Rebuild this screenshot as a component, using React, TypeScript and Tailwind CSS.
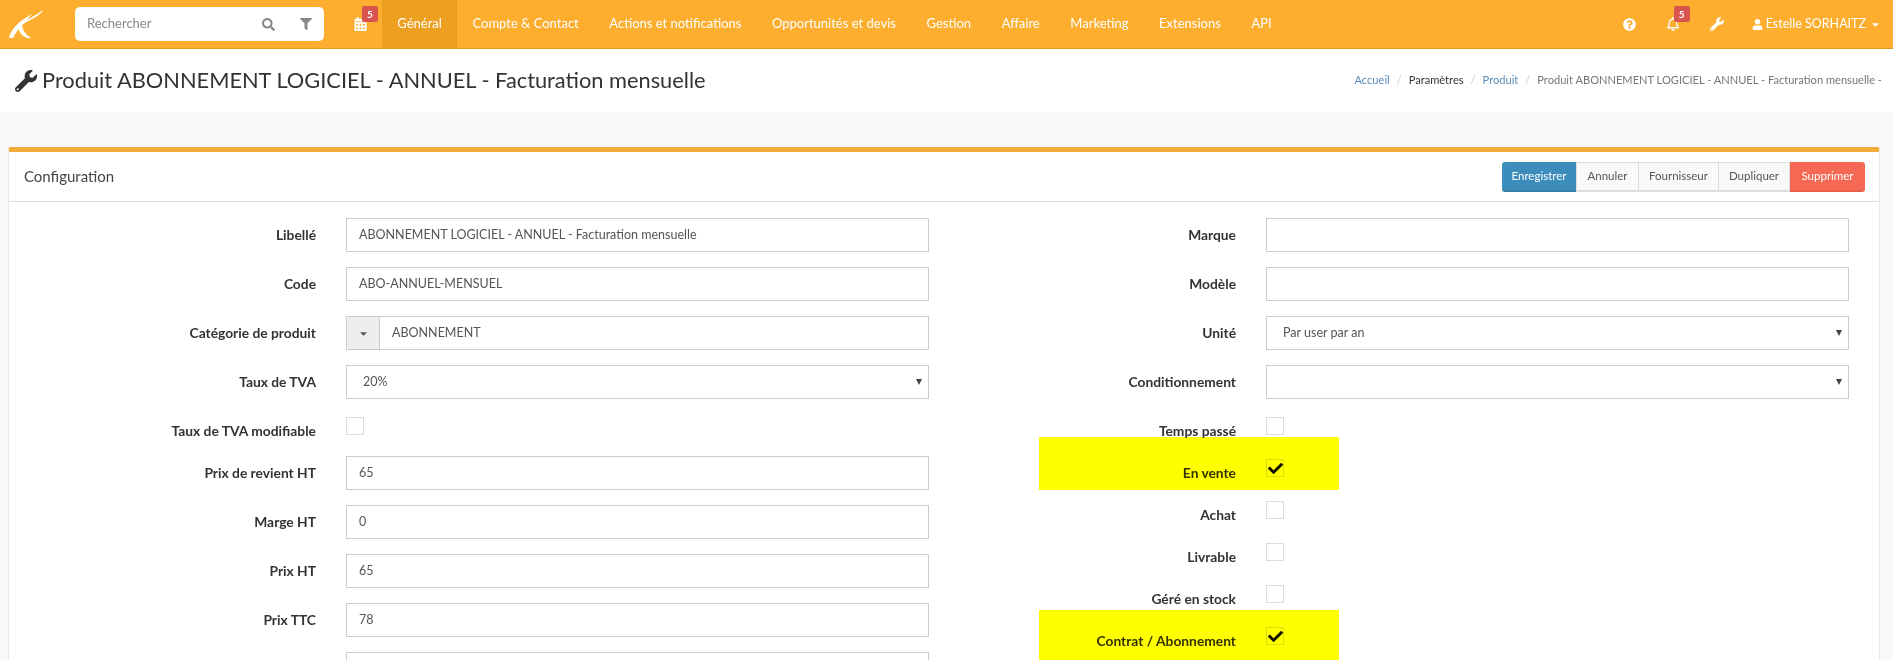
import React from "react";
import {
  FaCalendarAlt,
  FaCaretDown,
  FaCheck,
  FaFilter,
  FaQuestionCircle,
  FaRegBell,
  FaSearch,
  FaUser,
  FaWrench,
} from "react-icons/fa";

const menu = [
  "Général",
  "Compte & Contact",
  "Actions et notifications",
  "Opportunités et devis",
  "Gestion",
  "Affaire",
  "Marketing",
  "Extensions",
  "API",
];

const Badge = ({ className }: { className: string }) => (
  <span
    className={`absolute flex h-[16px] w-[16px] items-center justify-center rounded-[2px] bg-[#d9534f] text-[10px] font-bold text-white ${className}`}
  >
    5
  </span>
);

const Label = ({ children }: { children: React.ReactNode }) => (
  <label className="w-[337px] shrink-0 pr-[30px] text-right text-[13.8px] font-bold text-[#333]">
    {children}
  </label>
);

const Field = ({ label, value }: { label: string; value?: string }) => (
  <div className="flex h-[49px] items-start">
    <div className="flex h-[34px] items-center justify-end">
      <Label>{label}</Label>
    </div>
    <div className="flex h-[34px] flex-1 items-center border border-[#ccc] px-[12px] text-[12.5px] text-[#555]">
      {value}
    </div>
  </div>
);

const Select = ({ label, value }: { label: string; value?: string }) => (
  <div className="flex h-[49px] items-start">
    <div className="flex h-[34px] items-center justify-end">
      <Label>{label}</Label>
    </div>
    <div className="flex h-[34px] flex-1 items-center border border-[#ccc] pl-[16px] pr-[6px] text-[12.5px] text-[#555]">
      {value}
      <svg className="ml-auto" width="6" height="6" viewBox="0 0 6 6">
        <path d="M0 0H6L3 6Z" fill="#444" />
      </svg>
    </div>
  </div>
);

const Check = ({
  label,
  checked,
  mark,
}: {
  label: string;
  checked?: boolean;
  mark?: "first" | "second";
}) => (
  <div className="relative flex h-[42px] items-start">
    <div className="flex h-[28px] items-center">
      <Label>{label}</Label>
    </div>
    <div className="flex h-[18px] w-[18px] items-center justify-center border border-[#ddd] text-[#111]">
      {checked && <FaCheck className="text-[15px]" />}
    </div>
    {mark === "first" && (
      <div className="pointer-events-none absolute -top-[22px] left-[110px] h-[53px] w-[300px] bg-[#ffff00] mix-blend-multiply" />
    )}
    {mark === "second" && (
      <div className="pointer-events-none absolute -top-[17px] left-[110px] h-[53px] w-[300px] bg-[#ffff00] mix-blend-multiply" />
    )}
  </div>
);

export default function App() {
  return (
    <div className="h-[660px] overflow-hidden bg-[#f9f9f9] font-['Lato','Liberation_Sans',sans-serif] text-[#333]">
      <header className="flex h-[49px] items-center border-b border-[#e09a20] bg-[#fdae2f] text-white">
        <div className="flex w-[75px] pl-[8px]">
          <svg width="36" height="30" viewBox="0 0 36 30">
            <path d="M1 29C2 21 12 11 24 5C18 12 9 20 5 29Z" fill="#fff" />
            <path d="M35 1C33 7 22 10 14 16C15 22 18 26 23 29C17 30 11 25 10 18C9 15 26 8 35 1Z" fill="#fff" />
          </svg>
        </div>
        <div className="flex h-[34px] w-[249px] items-center rounded-[5px] bg-white pl-[12px] pr-[12px] text-[13px] text-[#888]">
          <span className="flex-1">Rechercher</span>
          <FaSearch className="mr-[25px] text-[13px] text-[#888]" />
          <FaFilter className="text-[12px] text-[#888]" />
        </div>
        <div className="relative ml-[30px] mr-[15px] flex h-[14px] w-[13px]">
          <FaCalendarAlt className="text-[14px]" />
          <Badge className="-top-[11px] left-[8px]" />
        </div>
        <nav className="flex h-full text-[13px]">
          {menu.map((m, i) => (
            <a
              key={m}
              className={`flex items-center px-[15.3px] ${i === 0 ? "bg-[#eda020]" : ""}`}
            >
              {m}
            </a>
          ))}
        </nav>
        <div className="ml-auto flex items-center pr-[12px] text-[12.5px]">
          <FaQuestionCircle className="mr-[30px] text-[13px]" />
          <div className="relative mr-[30px] flex">
            <FaRegBell className="text-[14px]" />
            <Badge className="-top-[11px] left-[8px]" />
          </div>
          <FaWrench className="mr-[28px] text-[14px]" />
          <FaUser className="mr-[3px] text-[11px]" />
          <span>Estelle SORHAITZ</span>
          <FaCaretDown className="ml-[4px] text-[11px]" />
        </div>
      </header>

      <section className="flex h-[63px] items-center justify-between bg-white pl-[15px] pr-[11px]">
        <h1 className="flex items-center text-[21.8px] text-[#333]">
          <FaWrench className="mr-[5px] text-[22px]" />
          Produit ABONNEMENT LOGICIEL - ANNUEL - Facturation mensuelle
        </h1>
        <div className="flex gap-[7px] text-[11.1px] text-[#777]">
          <a className="text-[#5b8db8]">Accueil</a>
          <span className="text-[#ccc]">/</span>
          <span className="text-[#333]">Paramètres</span>
          <span className="text-[#ccc]">/</span>
          <a className="text-[#5b8db8]">Produit</a>
          <span className="text-[#ccc]">/</span>
          <span>Produit ABONNEMENT LOGICIEL - ANNUEL - Facturation mensuelle -</span>
        </div>
      </section>

      <main className="ml-[8px] mr-[13px] mt-[35px] rounded-t-[3px] border-x border-[#e8e8e8] border-t-[5px] border-t-[#f0ad3c] bg-white">
        <div className="flex h-[50px] items-center justify-between border-b border-[#ddd] pl-[15px] pr-[14px]">
          <h2 className="text-[15px] text-[#444]">Configuration</h2>
          <div className="flex h-[30px] text-[11.5px]">
            <button className="w-[74px] rounded-l-[3px] border-b-2 border-[#367fa9] bg-[#3c8dbc] text-white">
              Enregistrer
            </button>
            <button className="w-[63px] border-x border-t border-b-2 border-[#ddd] bg-[#f9f9f9] text-[#555]">
              Annuler
            </button>
            <button className="w-[80px] border-r border-t border-b-2 border-[#ddd] bg-[#f9f9f9] text-[#555]">
              Fournisseur
            </button>
            <button className="w-[71px] border-r border-t border-b-2 border-[#ddd] bg-[#f9f9f9] text-[#555]">
              Dupliquer
            </button>
            <button className="w-[75px] rounded-r-[3px] border-b-2 border-[#e8604c] bg-[#f56954] text-white">
              Supprimer
            </button>
          </div>
        </div>

        <div className="flex pr-[30px] pt-[16px]">
          <div className="flex-1">
            <Field label="Libellé" value="ABONNEMENT LOGICIEL - ANNUEL - Facturation mensuelle" />
            <Field label="Code" value="ABO-ANNUEL-MENSUEL" />
            <div className="flex h-[49px] items-start">
              <div className="flex h-[34px] items-center justify-end">
                <Label>Catégorie de produit</Label>
              </div>
              <div className="flex h-[34px] flex-1 items-center border border-[#ccc] text-[12.5px] text-[#555]">
                <span className="flex h-full w-[33px] items-center justify-center rounded-l-[3px] border-r border-[#ccc] bg-[#eee]">
                  <FaCaretDown className="text-[11px]" />
                </span>
                <span className="pl-[12px]">ABONNEMENT</span>
              </div>
            </div>
            <Select label="Taux de TVA" value="20%" />
            <div className="h-[42px] pt-[3px]">
              <Check label="Taux de TVA modifiable" />
            </div>
            <Field label="Prix de revient HT" value="65" />
            <Field label="Marge HT" value="0" />
            <Field label="Prix HT" value="65" />
            <Field label="Prix TTC" value="78" />
            <Field label="" />
          </div>
          <div className="flex-1">
            <Field label="Marque" />
            <Field label="Modèle" />
            <Select label="Unité" value="Par user par an" />
            <Select label="Conditionnement" />
            <div className="pt-[3px]">
              <Check label="Temps passé" />
              <Check label="En vente" checked mark="first" />
              <Check label="Achat" />
              <Check label="Livrable" />
              <Check label="Géré en stock" />
              <Check label="Contrat / Abonnement" checked mark="second" />
            </div>
          </div>
        </div>
      </main>
    </div>
  );
}
